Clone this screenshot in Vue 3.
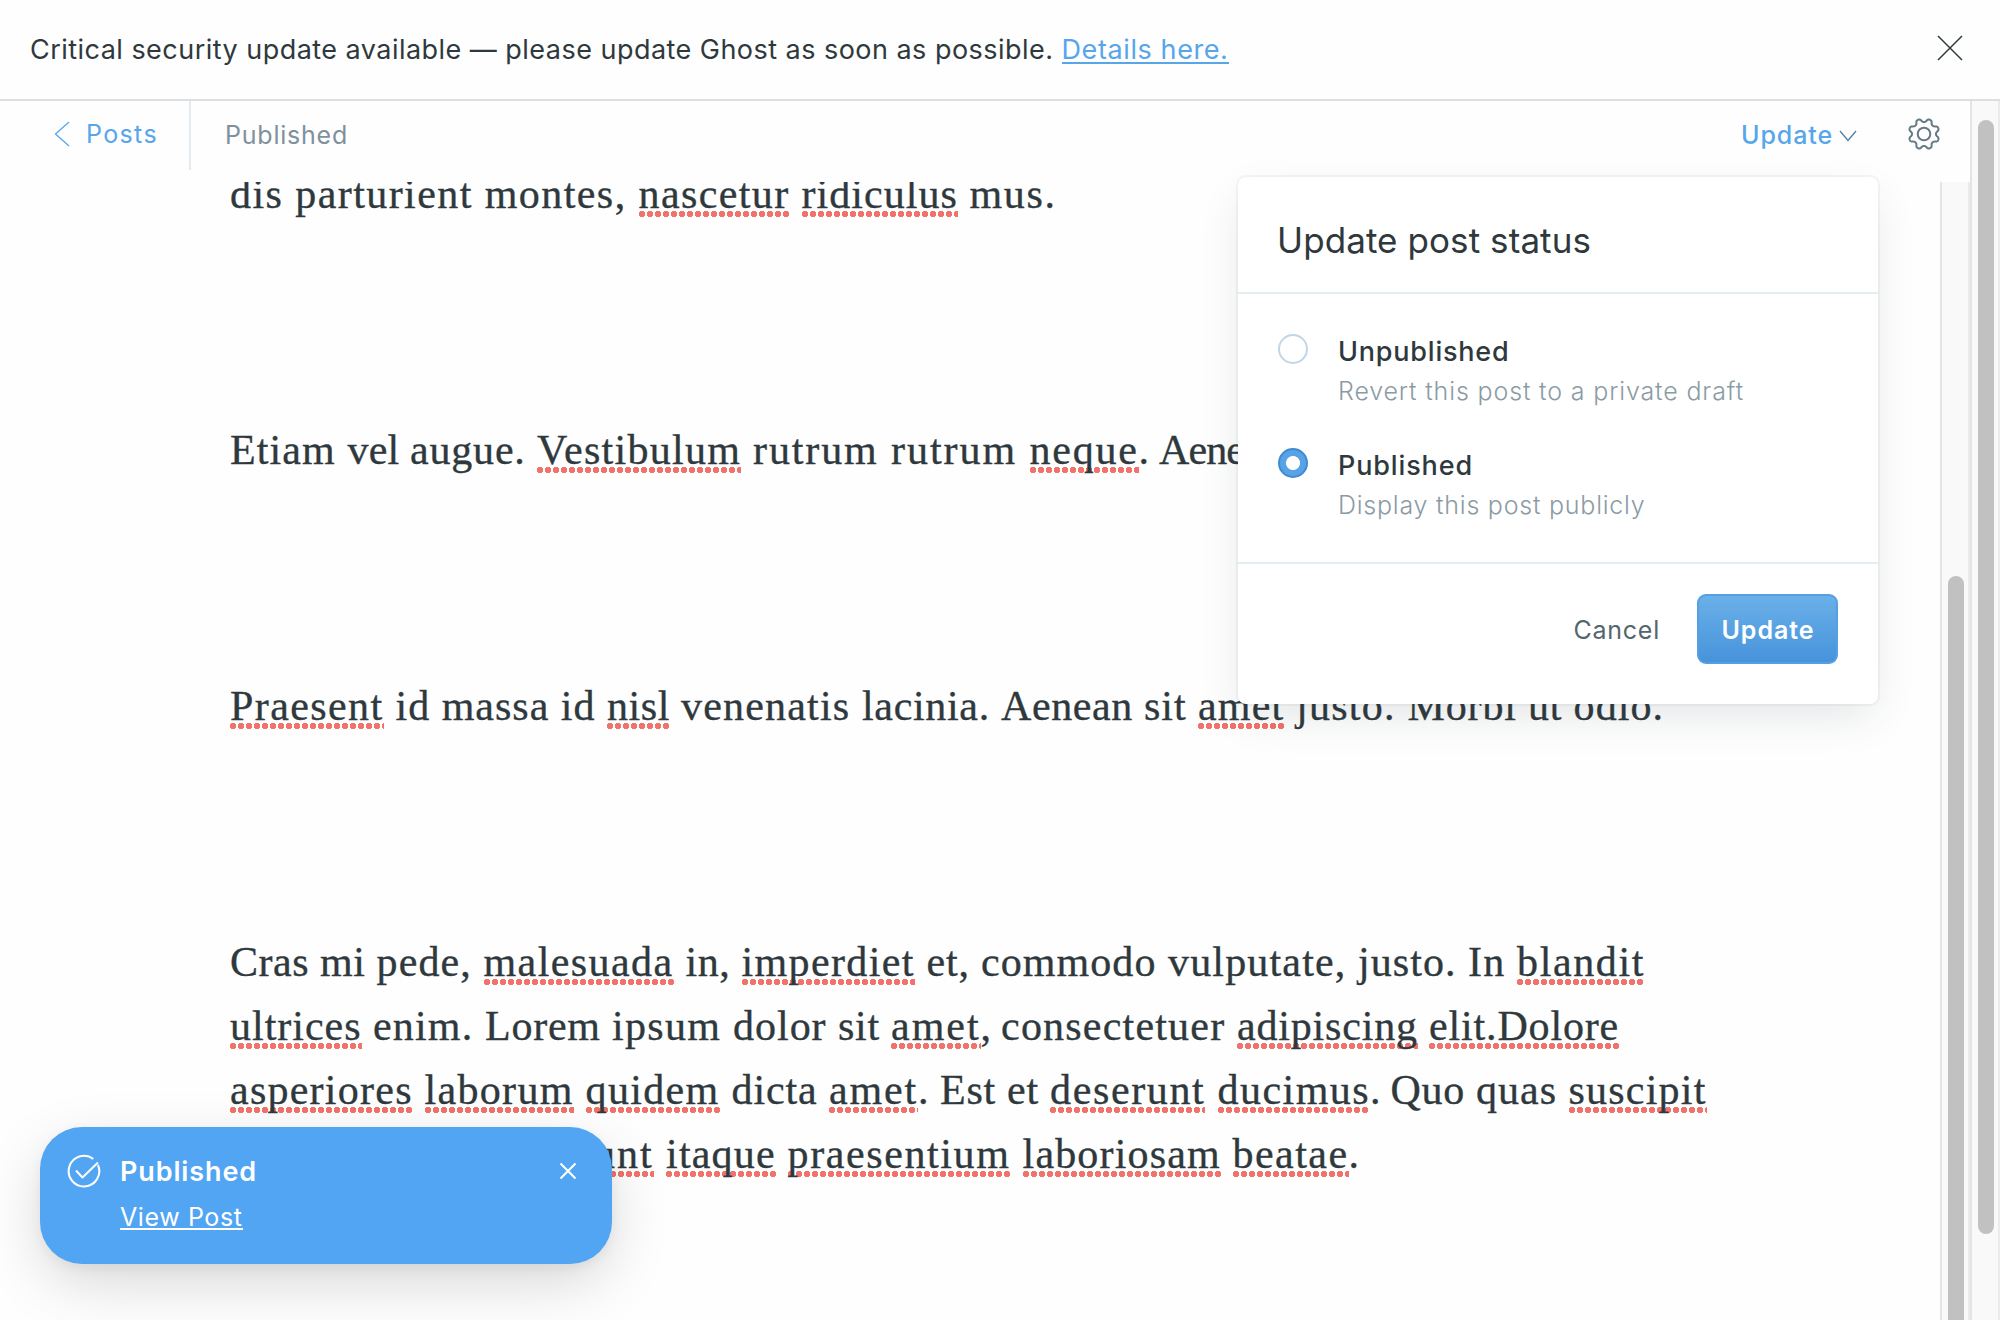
<script setup>
// Each run of text is [text, width, misspelled]; a run's width reaches to the start of the next run.
const paragraphs = [
  [
    [['dis parturient montes, ', 408.5], ['nascetur ', 163, 1], ['ridiculus ', 168, 1], ['mus.', 87]],
  ],
  [
    [['Etiam ', 117.5], ['vel ', 62.5], ['augue. ', 127], ['Vestibulum ', 216, 1], ['rutrum ', 138], ['rutrum ', 138.5],
      ['neque', 109, 1], ['. ', 20.5], ['Aenean nec', 188]],
  ],
  [
    [['Praesent ', 165.5, 1], ['id massa id ', 211.5], ['nisl ', 74, 1], ['venenatis ', 181], ['lacinia. ', 139], ['Aenean ', 143],
      ['sit ', 54], ['amet ', 98, 1], ['justo. ', 111.5], ['Morbi ', 120.5], ['ut ', 45.5], ['odio.', 90.5]],
  ],
  [
    [['Cras ', 90], ['mi ', 56.5], ['pede, ', 107], ['malesuada ', 202, 1], ['in, ', 56], ['imperdiet ', 185, 1], ['et, ', 54.5],
      ['commodo ', 187], ['vulputate, ', 190], ['justo. ', 110], ['In ', 49], ['blandit', 128, 1]],
    [['ultrices ', 143, 1], ['enim. ', 112], ['Lorem ', 127], ['ipsum ', 121], ['dolor ', 105], ['sit ', 53], ['amet', 89.5, 1],
      [', ', 20.5], ['consectetuer ', 236], ['adipiscing ', 192, 1], ['elit.Dolore', 190, 1]],
    [['asperiores ', 194.5, 1], ['laborum ', 161, 1], ['quidem ', 146, 1], ['dicta ', 97.5], ['amet', 89, 1], ['. ', 22],
      ['Est ', 67], ['et ', 43], ['deserunt ', 167.5, 1], ['ducimus', 152.5, 1], ['. ', 20.5], ['Quo ', 85.5], ['quas ', 92.5],
      ['suscipit', 138, 1]],
    [['voluptate fugiat ', 268], ['nesciunt ', 168, 1], ['itaque ', 121.5, 1], ['praesentium ', 235, 1],
      ['laboriosam ', 210, 1], ['beatae', 116, 1], ['.', 11]],
  ],
]

const options = [
  { title: 'Unpublished', tw: 171.5, text: 'Revert this post to a private draft', w: 406, on: false },
  { title: 'Published', tw: 135, text: 'Display this post publicly', w: 307.5, on: true },
]

// Spreads the letters of a run so that it fills its measure.
const vFit = {
  mounted(el, { value }) {
    const natural = el.getBoundingClientRect().width
    el.style.letterSpacing = `${(value - natural) / el.textContent.length}px`
  },
}

const gearPath = Array.from({ length: 144 }, (_, i) => {
  const a = (i / 144) * Math.PI * 2
  const r = 13.7 - (1.7 * Math.tanh(1.4 * Math.cos(8 * a))) / Math.tanh(1.4)
  return `${i ? 'L' : 'M'}${(17 + r * Math.sin(a)).toFixed(2)} ${(17 - r * Math.cos(a)).toFixed(2)}`
}).join('') + 'Z'
</script>

<template>
  <div class="app">
    <div class="banner">
      <p class="banner-text"><span v-fit="1031.5" class="run">Critical security update available — please update Ghost as soon as possible. </span><a class="link"><span v-fit="167" class="run">Details here.</span></a></p>
      <svg class="banner-close" width="26" height="26" viewBox="0 0 26 26"><path d="M1 1 25 25M25 1 1 25" /></svg>
    </div>

    <div class="shell">
      <div class="main">
        <header class="bar">
          <a class="back">
            <svg width="16" height="26" viewBox="0 0 16 26"><path d="M15 1 1.5 13 15 25" /></svg>
            <span v-fit="72" class="run">Posts</span>
          </a>
          <div class="status"><span v-fit="123" class="run">Published</span></div>
          <div class="trigger">
            <span v-fit="92" class="run">Update</span>
            <svg width="18" height="12" viewBox="0 0 18 12"><path d="M1 1 9 10.5 17 1" /></svg>
          </div>
          <svg class="gear" width="34" height="34" viewBox="0 0 34 34">
            <path :d="gearPath" />
            <circle cx="17" cy="17" r="6.3" />
          </svg>
        </header>

        <div class="editor">
          <article class="article">
            <p v-for="(lines, p) in paragraphs" :key="p">
              <span v-for="(line, l) in lines" :key="l" class="line"><span v-for="([text, width, bad], s) in line" :key="s" v-fit="width" class="run"><span :class="{ bad }">{{ text.trimEnd() }}</span>{{ text.slice(text.trimEnd().length) }}</span></span>
            </p>
          </article>
          <div class="track"><div class="thumb inner-thumb"></div></div>
        </div>
      </div>
      <div class="track"><div class="thumb outer-thumb"></div></div>
    </div>

    <section class="popover">
      <h2><span v-fit="314" class="run">Update post status</span></h2>
      <div class="options">
        <div v-for="o in options" :key="o.title" class="option">
          <i class="radio" :class="{ on: o.on }"></i>
          <div>
            <div class="option-title"><span v-fit="o.tw" class="run">{{ o.title }}</span></div>
            <div class="option-text"><span v-fit="o.w" class="run">{{ o.text }}</span></div>
          </div>
        </div>
      </div>
      <footer>
        <span class="cancel"><span v-fit="86.5" class="run">Cancel</span></span>
        <button><span v-fit="93" class="run">Update</span></button>
      </footer>
    </section>

    <aside class="toast">
      <svg class="check" width="34" height="34" viewBox="0 0 34 34">
        <path d="M26.3 5A15.3 15.3 0 1 0 31 11" />
        <path d="M9 16.5 15.5 23.5 31 8.5" />
      </svg>
      <div class="toast-body">
        <div class="toast-title"><span v-fit="137" class="run">Published</span></div>
        <a class="toast-link"><span v-fit="122.5" class="run">View Post</span></a>
      </div>
      <svg class="toast-close" width="18" height="18" viewBox="0 0 18 18"><path d="M1.5 1.5 16.5 16.5M16.5 1.5 1.5 16.5" /></svg>
    </aside>
  </div>
</template>

<style>
body {
  margin: 0;
  background: #fff;
}
</style>

<style scoped>
.app {
  position: relative;
  display: flex;
  flex-direction: column;
  width: 2000px;
  height: 1320px;
  overflow: hidden;
  background: #fefefe;
  color: #2f393d;
  font-family: Inter, "Liberation Sans", sans-serif;
}
.app * {
  box-sizing: border-box;
}
svg {
  display: block;
  flex: none;
  fill: none;
  stroke-width: 1.5;
  stroke-linejoin: round;
}
p,
h2 {
  margin: 0;
}
.run {
  display: inline-block;
  white-space: pre;
}
.banner {
  display: flex;
  flex: none;
  align-items: center;
  justify-content: space-between;
  height: 101px;
  padding: 0 37px 0 30px;
  border-bottom: 2px solid #dcdfdf;
}
.banner-text {
  font-size: 27px;
  line-height: 40px;
  white-space: nowrap;
}
.link {
  display: inline-block;
  color: #57a6ea;
  background: linear-gradient(currentColor, currentColor) 0 32px / 100% 2px no-repeat;
}
.banner-close {
  margin-bottom: 3px;
  stroke: #2f393d;
}
.shell {
  display: flex;
  flex: 1;
  min-height: 0;
}
.main {
  display: flex;
  flex: 1;
  flex-direction: column;
}
.bar {
  display: flex;
  flex: none;
  align-items: flex-start;
  height: 81px;
  padding: 0 29px 0 54px;
  font-size: 25px;
}
.back {
  display: flex;
  align-items: center;
  width: 137px;
  height: 69px;
  padding-bottom: 3px;
  gap: 16px;
  border-right: 2px solid #e3ebf1;
  color: #57a6ea;
}
.back svg {
  stroke: #57a6ea;
  stroke-width: 1.3;
}
.status {
  flex: 1;
  padding-left: 34px;
  color: #7f919c;
  line-height: 68px;
}
.trigger {
  display: flex;
  align-items: center;
  height: 68px;
  gap: 6px;
  color: #57a6ea;
  font-weight: 500;
}
.trigger svg {
  margin-top: 2px;
  stroke: #4f7fa6;
  stroke-width: 1.3;
}
.gear {
  margin: 16px 0 0 50px;
  stroke: #667a86;
  stroke-width: 2;
}
.editor {
  display: flex;
  flex: 1;
  min-height: 0;
}
.article {
  flex: 1;
  padding-left: 230px;
  overflow: hidden;
  font: 42px/64px "Liberation Serif", "Times New Roman", serif;
  -webkit-text-stroke: 0.35px #2f393d;
}
.article p {
  margin-bottom: 192px;
}
.article p:first-child {
  margin-top: -20px;
}
.line {
  display: block;
  height: 64px;
  white-space: nowrap;
}
.bad {
  padding-bottom: 3px;
  background: radial-gradient(circle at 3px 3px, #f0736b 2.9px, transparent 3.5px) 0 40px / 8px 6px repeat-x;
}
.track {
  flex: none;
  width: 30px;
  padding: 0 4px 0 6px;
  border: solid #e4e4e4;
  border-width: 0 2px;
  border-right-color: #ebebeb;
  background: #f9f9f9;
}
.thumb {
  width: 16px;
  border-radius: 8px;
  background: #c1c1c1;
}
.outer-thumb {
  height: 1114px;
  margin-top: 19px;
}
.inner-thumb {
  height: 800px;
  margin-top: 394px;
}
.popover {
  position: absolute;
  top: 177px;
  left: 1238px;
  width: 640px;
  height: 527px;
  border-radius: 8px;
  background: #fff;
  box-shadow: 0 0 0 2px rgba(20, 30, 35, 0.04), 0 16px 44px -6px rgba(40, 55, 60, 0.13);
}
h2 {
  height: 117px;
  padding: 40px 0 0 39px;
  border-bottom: 2px solid #e3edf4;
  font-size: 35px;
  font-weight: 400;
  line-height: 46px;
}
.options {
  display: flex;
  flex-direction: column;
  height: 270px;
  padding: 37px 40px 0;
  gap: 34px;
  border-bottom: 2px solid #e3edf4;
}
.option {
  display: flex;
  gap: 30px;
  line-height: 40px;
}
.option-title {
  height: 40px;
  padding-top: 1px;
  font-size: 27px;
  font-weight: 500;
}
.option-text {
  height: 40px;
  color: #8b9ba5;
  font-size: 25px;
  font-weight: 300;
}
.radio {
  flex: none;
  width: 30px;
  height: 30px;
  margin-top: 3px;
  border: 2px solid #c0d6e7;
  border-radius: 50%;
}
.radio.on {
  border-color: #3f8ad4;
  background: radial-gradient(circle, #fff 6.6px, #58a3e5 7.4px);
}
footer {
  display: flex;
  align-items: flex-start;
  justify-content: flex-end;
  height: 140px;
  padding: 30px 40px 0;
  gap: 37px;
  font-size: 25px;
}
.cancel {
  color: #54666d;
  line-height: 72px;
}
button {
  width: 141px;
  height: 70px;
  padding: 2px 0 0 1px;
  border: 2px solid #559fe2;
  border-radius: 9px;
  background: linear-gradient(#6ab0e9, #4793db);
  color: #fff;
  font: 600 25px Inter, sans-serif;
}
.toast {
  position: absolute;
  top: 1127px;
  left: 40px;
  display: flex;
  width: 572px;
  height: 137px;
  padding: 24px 35px 0 27px;
  border-radius: 42px;
  background: #51a5f2;
  box-shadow: 0 20px 60px -4px rgba(0, 0, 0, 0.17), 0 4px 12px rgba(0, 0, 0, 0.05);
  color: #fff;
}
.toast svg {
  stroke: #fff;
  stroke-width: 2;
}
.check {
  margin-top: 3px;
}
.toast-body {
  flex: 1;
  padding-left: 19px;
}
.toast-title {
  height: 40px;
  margin-bottom: 6px;
  padding-top: 1px;
  font-size: 27px;
  font-weight: 600;
  line-height: 40px;
}
.toast-link {
  display: inline-block;
  height: 40px;
  background: linear-gradient(#fff, #fff) 0 31px / 100% 2px no-repeat;
  font-size: 25px;
  line-height: 40px;
}
.toast-close {
  margin-top: 11px;
}
</style>
